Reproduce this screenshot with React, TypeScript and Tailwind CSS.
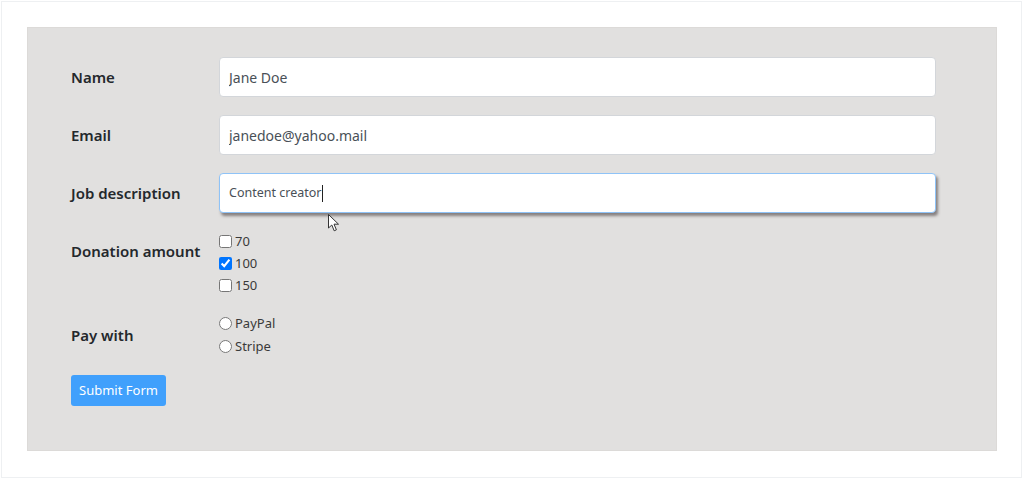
import React from 'react'

const font = { fontFamily: '"Noto Sans", "Open Sans", sans-serif' }

function Label({ children, className = '' }: { children: React.ReactNode; className?: string }) {
  return (
    <label className={`w-[148px] shrink-0 text-[15px] font-semibold text-[#24282c] ${className}`}>
      {children}
    </label>
  )
}

function Cursor() {
  return (
    <svg
      className="absolute left-[328px] top-[214px] pointer-events-none"
      width="12"
      height="18"
      viewBox="0 0 12 18"
    >
      <path
        d="M0.5 0.5 L0.5 14 L3.8 11 L6.2 16.8 L8.4 15.8 L6 10.2 L10.5 10.2 Z"
        fill="white"
        stroke="#333"
        strokeWidth="1"
        strokeLinejoin="round"
      />
    </svg>
  )
}

export default function App() {
  return (
    <div className="relative h-[479px] w-[1024px] bg-white p-px" style={font}>
      <div className="h-[477px] w-[1021px] border border-[#eef0f2] pt-[25px] pl-[25px]">
        {/* Form panel */}
        <form className="flex w-[970px] h-[424px] flex-col border border-[#dcdad8] bg-[#e1e0df] pt-[29px] pl-[43px]">
          <div className="flex items-center">
            <Label>Name</Label>
            <input
              defaultValue="Jane Doe"
              className="h-10 w-[717px] rounded border border-[#d3d6da] bg-white px-[9px] text-[14px] text-[#495057] outline-none"
            />
          </div>

          <div className="mt-[18px] flex items-center">
            <Label>Email</Label>
            <input
              defaultValue="janedoe@yahoo.mail"
              className="h-10 w-[717px] rounded border border-[#d3d6da] bg-white px-[9px] text-[14px] text-[#495057] outline-none"
            />
          </div>

          <div className="mt-[18px] flex items-center">
            <Label>Job description</Label>
            <div className="flex h-10 w-[717px] items-center rounded border border-[#8fc3f7] bg-white px-[9px] text-[12.5px] text-[#495057] shadow-[2px_3px_3px_rgba(60,50,50,0.55)]">
              Content creator
              <span className="ml-px inline-block h-[17px] w-px bg-[#222]" />
            </div>
          </div>

          {/* Donation */}
          <div className="mt-[17px] flex items-start">
            <Label className="mt-[10px]">Donation amount</Label>
            <div className="flex flex-col text-[13px] leading-[22px] text-[#3a3a3a]">
              {[
                ['70', false],
                ['100', true],
                ['150', false],
              ].map(([v, c]) => (
                <label key={v as string} className="flex items-center">
                  <input
                    type="checkbox"
                    defaultChecked={c as boolean}
                    className="m-0 mr-[3px] h-[13px] w-[13px]"
                  />
                  {v}
                </label>
              ))}
            </div>
          </div>

          {/* Pay with */}
          <div className="mt-[16px] flex items-center">
            <Label>Pay with</Label>
            <div className="flex flex-col text-[13px] leading-[23px] text-[#3a3a3a]">
              <label className="flex items-center">
                <input type="radio" name="pay" className="m-0 mr-[3px] h-[13px] w-[13px]" />
                PayPal
              </label>
              <label className="flex items-center">
                <input type="radio" name="pay" className="m-0 mr-[3px] h-[13px] w-[13px]" />
                Stripe
              </label>
            </div>
          </div>

          <div className="mt-[17px]">
            <button
              type="button"
              className="h-[31px] w-[95px] rounded-[3px] bg-[#40a0fc] text-[13px] text-white"
            >
              Submit Form
            </button>
          </div>
        </form>
      </div>
      <Cursor />
    </div>
  )
}
